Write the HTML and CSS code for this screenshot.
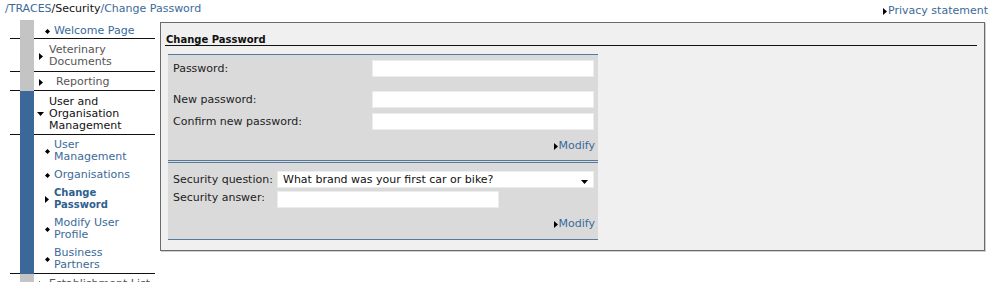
FILE: index.html
```html
<!DOCTYPE html>
<html lang="en">
<head>
<meta charset="utf-8">
<title>TRACES - Change Password</title>
<link rel="stylesheet" href="styles.css">
</head>
<body>
<header class="topbar">
  <div class="crumbs"><a class="lnk" href="#">/TRACES</a>/Security<a class="lnk" href="#">/Change Password</a></div>
  <a class="privacy lnk" href="#"><svg class="tri-r" width="4" height="7" viewBox="0 0 4 7"><polygon points="0,0 4,3.5 0,7" fill="#000"/></svg>Privacy statement</a>
</header>
<div class="layout">
  <nav class="nav">
    <div class="item line r1"><span class="gap"></span><span class="strip gray"></span><span class="body"><span class="ico sub"><svg width="5" height="5" viewBox="0 0 5 5"><polygon points="2.5,0 5,2.5 2.5,5 0,2.5" fill="#000"/></svg></span><a class="lnk" href="#">Welcome Page</a></span></div>
    <div class="item line r2"><span class="gap"></span><span class="strip gray"></span><span class="body"><span class="ico top"><svg width="4" height="7" viewBox="0 0 4 7"><polygon points="0,0 4,3.5 0,7" fill="#000"/></svg></span><span class="dim">Veterinary<br>Documents</span></span></div>
    <div class="item line r3"><span class="gap"></span><span class="strip gray"></span><span class="body"><span class="ico top"><svg width="4" height="7" viewBox="0 0 4 7"><polygon points="0,0 4,3.5 0,7" fill="#000"/></svg></span><span class="dim indent">Reporting</span></span></div>
    <div class="item line r4"><span class="gap"></span><span class="strip blue"></span><span class="body"><span class="ico down"><svg width="7" height="4" viewBox="0 0 7 4"><polygon points="0,0 7,0 3.5,4" fill="#000"/></svg></span><span class="cur">User and<br>Organisation<br>Management</span></span></div>
    <div class="item sb"><span class="gap"></span><span class="strip blue"></span><span class="body"><span class="ico sub"><svg width="5" height="5" viewBox="0 0 5 5"><polygon points="2.5,0 5,2.5 2.5,5 0,2.5" fill="#000"/></svg></span><a class="lnk" href="#">User<br>Management</a></span></div>
    <div class="item sb"><span class="gap"></span><span class="strip blue"></span><span class="body"><span class="ico sub"><svg width="5" height="5" viewBox="0 0 5 5"><polygon points="2.5,0 5,2.5 2.5,5 0,2.5" fill="#000"/></svg></span><a class="lnk" href="#">Organisations</a></span></div>
    <div class="item sb"><span class="gap"></span><span class="strip blue"></span><span class="body"><span class="ico sub"><svg width="4" height="7" viewBox="0 0 4 7"><polygon points="0,0 4,3.5 0,7" fill="#000"/></svg></span><a class="lnk active" href="#">Change<br>Password</a></span></div>
    <div class="item sb"><span class="gap"></span><span class="strip blue"></span><span class="body"><span class="ico sub"><svg width="5" height="5" viewBox="0 0 5 5"><polygon points="2.5,0 5,2.5 2.5,5 0,2.5" fill="#000"/></svg></span><a class="lnk" href="#">Modify User<br>Profile</a></span></div>
    <div class="item sb line"><span class="gap"></span><span class="strip blue"></span><span class="body"><span class="ico sub"><svg width="5" height="5" viewBox="0 0 5 5"><polygon points="2.5,0 5,2.5 2.5,5 0,2.5" fill="#000"/></svg></span><a class="lnk" href="#">Business<br>Partners</a></span></div>
    <div class="item line r5"><span class="gap"></span><span class="strip gray"></span><span class="body"><span class="ico top"><svg width="4" height="7" viewBox="0 0 4 7"><polygon points="0,0 4,3.5 0,7" fill="#000"/></svg></span><span class="dim">Establishment List</span></span></div>
  </nav>
  <main class="panel">
    <h1 class="title">Change Password</h1>
    <div class="box">
      <form class="sec sec1">
        <div class="row"><label class="lbl w1">Password:</label><input class="fld f1" type="password"></div>
        <div class="row spaced"><label class="lbl w1">New password:</label><input class="fld f1" type="password"></div>
        <div class="row"><label class="lbl w1">Confirm new password:</label><input class="fld f1" type="password"></div>
        <div class="act"><a class="lnk" href="#"><svg class="tri-r" width="4" height="7" viewBox="0 0 4 7"><polygon points="0,0 4,3.5 0,7" fill="#000"/></svg>Modify</a></div>
      </form>
      <div class="sep"></div>
      <form class="sec sec2">
        <div class="row"><label class="lbl w2">Security question:</label>
          <div class="selwrap">
            <select class="sel"><option>What brand was your first car or bike?</option></select>
            <svg class="selarrow" width="7" height="4" viewBox="0 0 7 4"><polygon points="0,0 7,0 3.5,4" fill="#000"/></svg>
          </div>
        </div>
        <div class="row ans"><label class="lbl w2">Security answer:</label><input class="fld f2" type="text"></div>
        <div class="act"><a class="lnk" href="#"><svg class="tri-r" width="4" height="7" viewBox="0 0 4 7"><polygon points="0,0 4,3.5 0,7" fill="#000"/></svg>Modify</a></div>
      </form>
    </div>
  </main>
</div>
</body>
</html>
```
FILE: styles.css
```css
html, body {
  margin: 0;
  padding: 0;
  background: #ffffff;
  height: 282px;
  overflow: hidden;
}
body {
  font-family: "DejaVu Sans", Verdana, sans-serif;
  font-size: 11px;
  line-height: 12px;
  color: #222;
}
.lnk {
  color: #3b6a99;
  text-decoration: none;
}
.topbar {
  height: 20px;
  display: flex;
  justify-content: space-between;
  align-items: flex-start;
}
.crumbs {
  padding: 3px 0 0 5px;
  color: #111;
}
.privacy {
  display: flex;
  align-items: center;
  padding: 5px 3px 0 0;
}
.tri-r {
  margin-right: 1px;
  flex: none;
}
.layout {
  display: flex;
  align-items: flex-start;
}
.nav {
  width: 155px;
  flex: none;
}
.item {
  display: flex;
  margin-left: 10px;
}
.gap {
  width: 10px;
  flex: none;
}
.strip {
  width: 14px;
  flex: none;
}
.strip.gray { background: #c4c4c4; }
.strip.blue { background: #3b6898; }
.body {
  flex: 1;
  display: flex;
  align-items: center;
  padding: 4px 0 2px;
}
.item.line .gap,
.item.line .body {
  border-bottom: 1px solid #111;
}
.r1 .body { padding: 5px 0 1px; }
.r2 .body { padding: 5px 0 3px; }
.r3 .body { padding: 4px 0 2px; }
.r4 .body { padding: 5px 0 2px; }
.r5 .body { padding: 4px 0 2px; }
.ico {
  flex: none;
  display: flex;
  align-items: center;
}
.ico.top { width: 10px; padding-left: 5px; }
.ico.down { width: 12px; padding-left: 3px; }
.ico.sub { width: 9px; padding-left: 11px; }
.dim { color: #555; }
.indent { padding-left: 7px; }
.cur { color: #111; }
.active {
  font-weight: bold;
  font-size: 10px;
  color: #2f5f8f;
}
.panel {
  flex: 1;
  margin: 2px 6px 0 5px;
  border: 1px solid #6a6a6a;
  background: #f0f0f0;
  padding-bottom: 10px;
  box-shadow: 1px 1px 0 #d0d0d0;
}
.title {
  margin: 0 7px 0 4px;
  padding: 11px 0 0 1px;
  font-size: 10px;
  line-height: 11px;
  font-weight: bold;
  color: #111;
  border-bottom: 1px solid #111;
}
.box {
  margin: 8px 0 0 7px;
  width: 430px;
  box-sizing: border-box;
  background: #dadada;
  border-top: 1px solid #56799e;
  border-bottom: 1px solid #56799e;
}
.sec {
  margin: 0;
  padding: 0 4px 0 5px;
}
.sec1 { padding-top: 5px; padding-bottom: 8px; }
.sec2 { padding-top: 8px; padding-bottom: 9px; }
.row {
  display: flex;
  align-items: center;
  height: 17px;
}
.row + .row { margin-top: 5px; }
.row.spaced { margin-top: 14px; }
.row.ans { margin-top: 3px; }
.lbl {
  flex: none;
  color: #222;
  padding-top: 1px;
}
.w1 { width: 199px; }
.w2 { width: 104px; }
.ans .lbl { padding-top: 0; padding-bottom: 4px; }
.fld {
  box-sizing: border-box;
  height: 17px;
  margin: 0;
  padding: 0 3px;
  border: 1px solid #ececec;
  background: #fff;
  font: inherit;
}
.f1 { width: 222px; }
.f2 { width: 222px; }
.selwrap {
  position: relative;
  width: 317px;
  height: 17px;
}
.sel {
  appearance: none;
  -webkit-appearance: none;
  box-sizing: border-box;
  width: 100%;
  height: 17px;
  margin: 0;
  padding: 0 0 0 5px;
  border: 1px solid #ececec;
  border-radius: 0;
  background: #fff;
  font: inherit;
  color: #111;
  line-height: 15px;
}
.selarrow {
  position: absolute;
  right: 6px;
  top: 9px;
}
.act {
  margin-top: 10px;
  height: 12px;
  display: flex;
  justify-content: flex-end;
}
.act .lnk {
  display: flex;
  align-items: center;
  margin-right: -1px;
}
.sep {
  height: 1px;
  border-top: 1px solid #56799e;
  border-bottom: 1px solid #56799e;
}
```
